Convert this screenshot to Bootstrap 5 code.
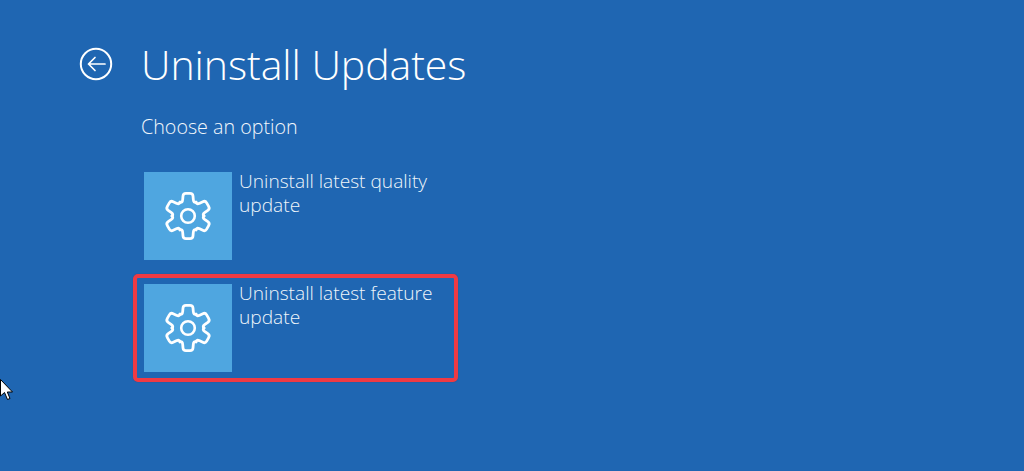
<!DOCTYPE html>
<html lang="en">
<head>
<meta charset="utf-8">
<title>Uninstall Updates</title>
<link href="https://cdn.jsdelivr.net/npm/bootstrap@5.3.0/dist/css/bootstrap.min.css" rel="stylesheet">
<style>
html,body{height:100%;}
body{background:#1f66b2;color:#fff;font-family:"Open Sans","Liberation Sans",sans-serif;font-weight:300;overflow:hidden;position:relative;}
.scr-wrap{padding:36px 0 0 79px;}
.scr-head{gap:28px;height:56px;}
.scr-back{width:34px;height:34px;background:none;border:0;padding:0;display:block;}
.scr-title{font-size:41px;font-weight:300;line-height:56px;margin:0;letter-spacing:-.05px;}
.scr-sub{font-size:19.7px;line-height:26px;margin:22px 0 0 62px;color:#f2f7fc;}
.scr-list{margin:22px 0 0 54px;gap:4px;width:325px;}
.scr-opt{border:4px solid transparent;border-radius:5px;padding:6px 7px;height:108px;gap:7px;color:#f0f6fb;font-size:19.15px;line-height:24px;text-decoration:none;}
.scr-opt:hover{color:#fff;}
.scr-opt.scr-on{border-color:#f03a43;box-shadow:0 0 1px 0 #5a2b55;}
.scr-tile{width:88px;height:88px;background:#4fa6e0;flex:none;}
.scr-label{width:205px;margin-top:-3px;}
.scr-cursor{position:absolute;left:0;top:379px;width:14px;height:22px;}
</style>
</head>
<body>
<svg width="0" height="0" class="position-absolute">
  <defs>
    <path id="gt" d="M-8,-13.9Q-5.6,-12.9 -5.3,-16.5L-5,-20Q-4.800,-22.700 -2,-22.700L2,-22.700Q4.800,-22.700 5,-20L5.300,-16.500Q5.600,-12.900 8,-13.900"/>
    <g id="gear" fill="none" stroke="#fff" stroke-width="2.800" stroke-linecap="round" stroke-linejoin="round">
      <use href="#gt"/><use href="#gt" transform="rotate(60)"/><use href="#gt" transform="rotate(120)"/>
      <use href="#gt" transform="rotate(180)"/><use href="#gt" transform="rotate(240)"/><use href="#gt" transform="rotate(300)"/>
      <circle r="6.800" stroke-width="2.600"/>
    </g>
  </defs>
</svg>
<main class="scr-wrap">
  <div class="scr-head d-flex align-items-center">
    <button class="scr-back" type="button" aria-label="Back">
      <svg width="34" height="34" viewBox="0 0 34 34" fill="none" stroke="#fff" stroke-width="2" stroke-linecap="round" stroke-linejoin="round">
        <circle cx="17" cy="17" r="15.2"/>
        <path d="M26 17H9.5M16 10.5L9.5 17L16 23.500" stroke-width="1.700"/>
      </svg>
    </button>
    <h1 class="scr-title">Uninstall Updates</h1>
  </div>
  <p class="scr-sub">Choose an option</p>
  <div class="scr-list d-flex flex-column">
    <a class="scr-opt d-flex" href="#">
      <span class="scr-tile d-flex align-items-center justify-content-center">
        <svg width="52" height="52" viewBox="-26 -26 52 52"><use href="#gear"/></svg>
      </span>
      <span class="scr-label">Uninstall latest quality update</span>
    </a>
    <a class="scr-opt scr-on d-flex" href="#">
      <span class="scr-tile d-flex align-items-center justify-content-center">
        <svg width="52" height="52" viewBox="-26 -26 52 52"><use href="#gear"/></svg>
      </span>
      <span class="scr-label">Uninstall latest feature update</span>
    </a>
  </div>
</main>
<svg class="scr-cursor" viewBox="0 0 14 22"><path d="M0.500 0.500V17L4.500 13.500L7.500 20.500L10 19.500L7.300 13H12.500Z" fill="#fff" stroke="#000" stroke-width="1"/></svg>
</body>
</html>
